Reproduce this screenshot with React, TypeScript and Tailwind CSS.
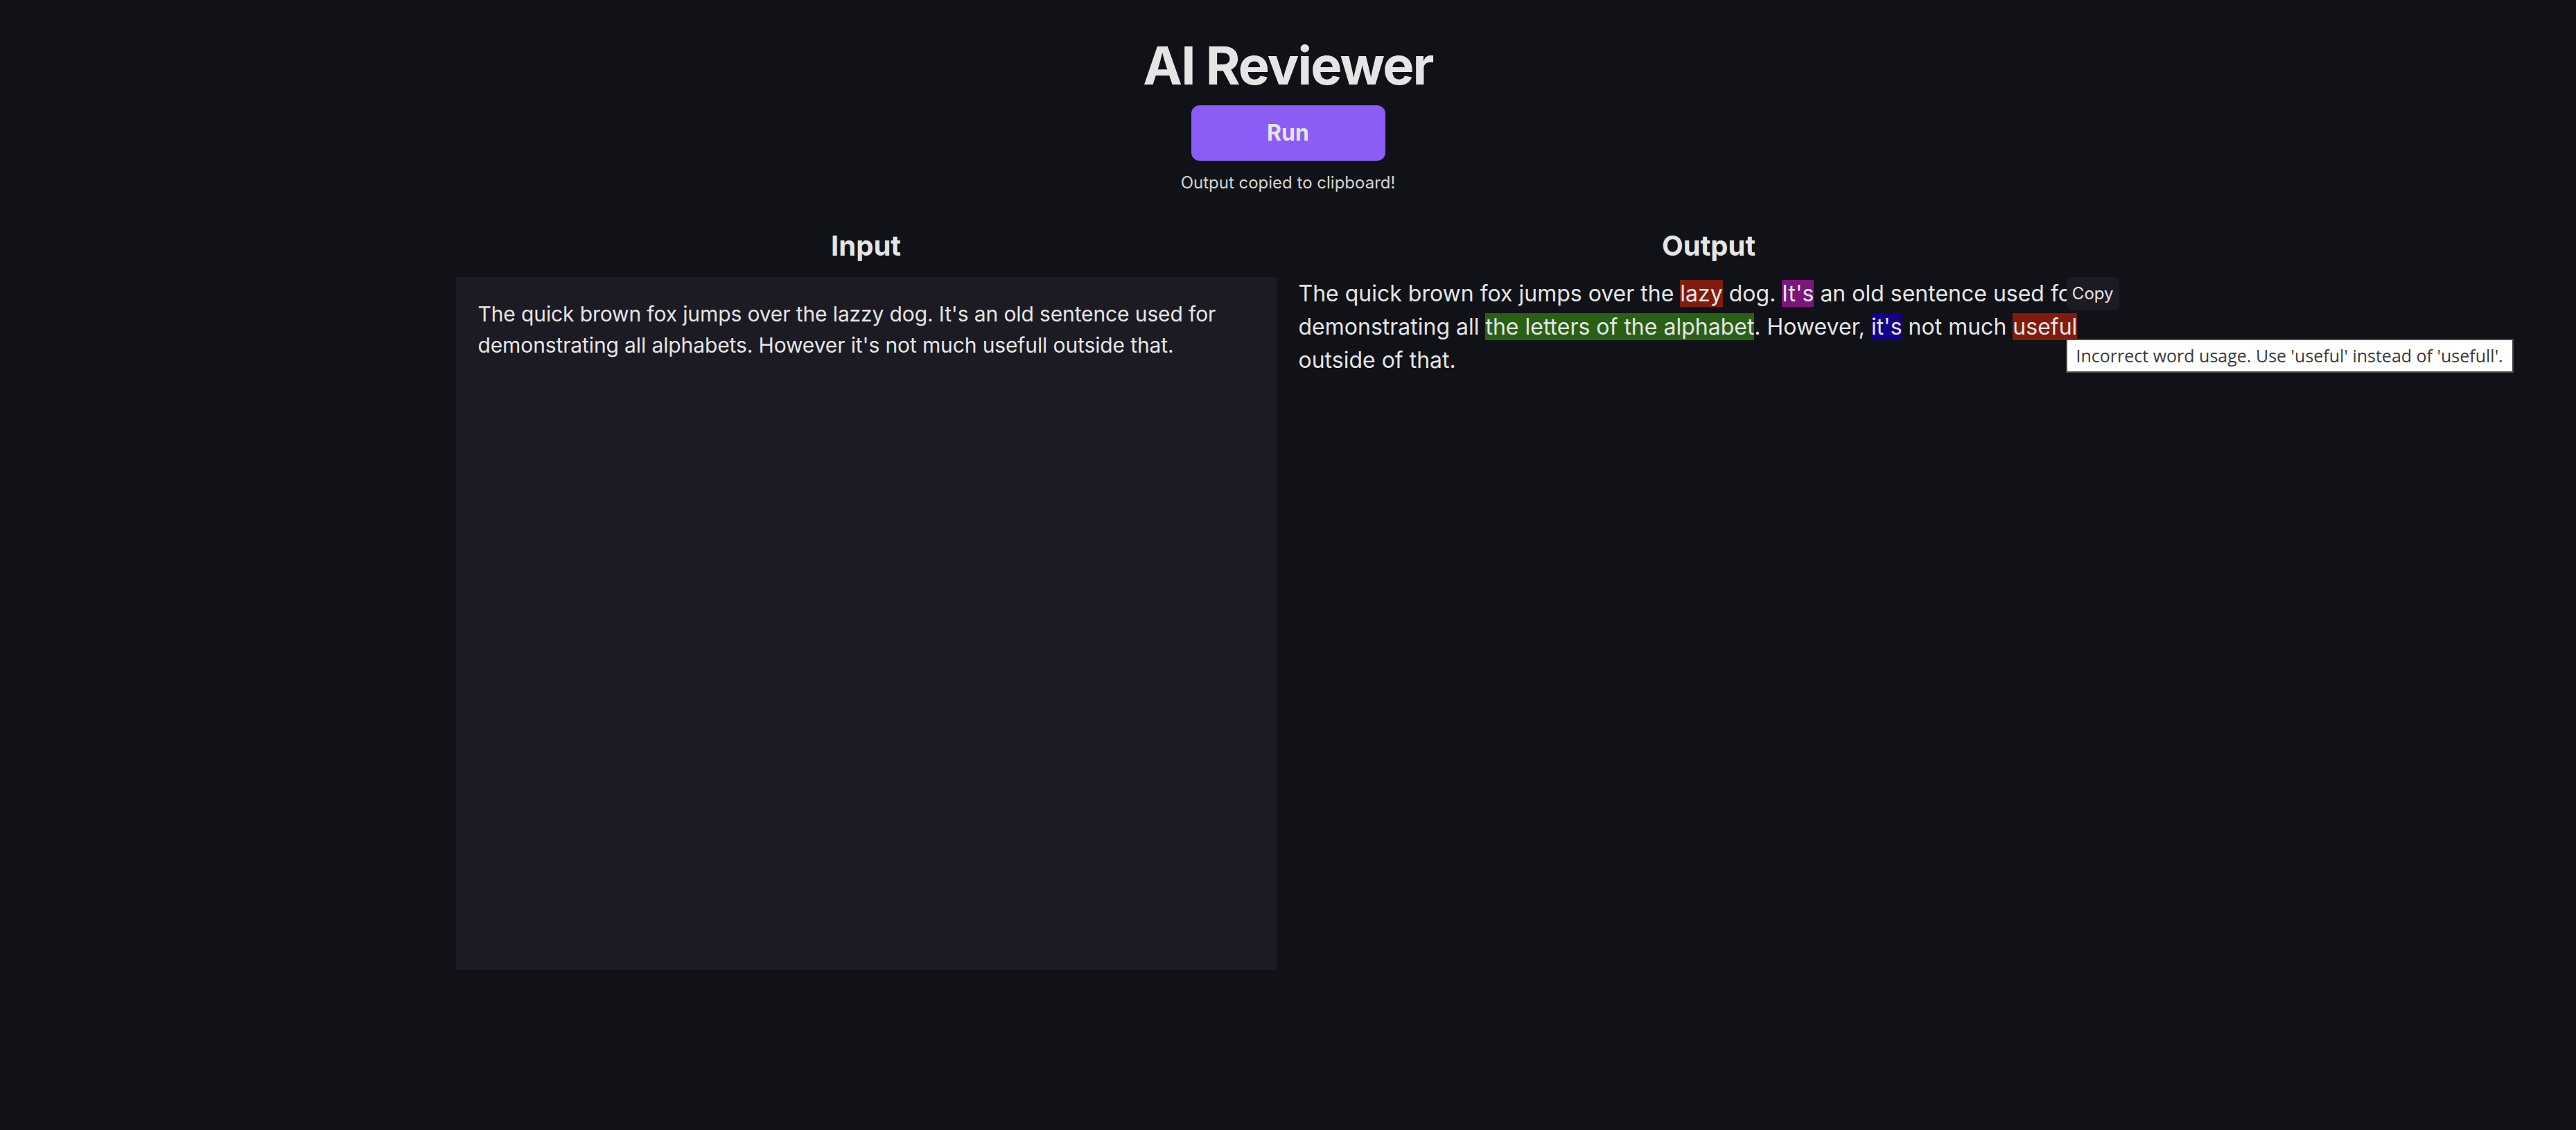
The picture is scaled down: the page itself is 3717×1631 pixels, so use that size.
import React from "react"

const sans = "font-['Inter','Liberation_Sans',sans-serif]"

function Mark({ color, children }: { color: string; children: React.ReactNode }) {
  return <span className={color}>{children}</span>
}

export default function App() {
  return (
    <div className={`min-h-screen bg-[#111217] pt-[56px] text-[#e5e5e5] ${sans}`}>
      <h1 className="text-center text-[76px] leading-[76px] font-bold tracking-[-0.025em] text-[#e5e5e5]">AI Reviewer</h1>
      <button className="mx-auto mt-[20px] block h-[80px] w-[280px] rounded-[12px] bg-[#8b5cf6] text-[32px] font-bold text-[#e5e5e5]">
        Run
      </button>
      <p className="mt-[16px] text-center text-[24px] leading-[32px] text-[#d4d4d4]">Output copied to clipboard!</p>

      <div className="mx-auto mt-[47px] grid w-[2400px] -translate-x-[1px] grid-cols-2 gap-x-[32px]">
        <div>
          <h2 className="mb-[17px] text-center text-[40px] leading-[56px] font-bold">Input</h2>
          <textarea
            readOnly
            className="block h-[1000px] w-full resize-none bg-[#1c1b24] px-[32px] pt-[31px] pb-[32px] text-[30px] leading-[45px] tracking-[-0.004em] text-[#e5e5e5] outline-none"
            value="The quick brown fox jumps over the lazzy dog. It's an old sentence used for demonstrating all alphabets. However it's not much usefull outside that."
          />
        </div>

        <div>
          <h2 className="mb-[17px] text-center text-[40px] leading-[56px] font-bold">Output</h2>
          <div className="relative">
            <p className="text-[32px] leading-[48px]">
              The quick brown fox jumps over the <Mark color="bg-[#801c0e]">lazy</Mark> dog.{" "}
              <Mark color="bg-[#7a167c]">It's</Mark> an old sentence used for demonstrating all{" "}
              <Mark color="bg-[#2a6016]">the letters of the alphabet</Mark>. However,{" "}
              <Mark color="bg-[#12008a]">it's</Mark> not much <Mark color="bg-[#801c0e]">useful</Mark> outside of that.
            </p>
            <button className="absolute top-0 right-0 h-[48px] rounded-[8px] bg-[#1c1b24] px-[8px] text-[24px] leading-[32px] text-[#e5e5e5]">
              Copy
            </button>
            <div className="absolute top-[89px] left-[1107px] border-2 border-[#4a4a4a] bg-white px-[13px] py-[6px] whitespace-nowrap font-['Open_Sans','Noto_Sans',sans-serif] text-[25px] leading-[33px] text-[#3a3a3a]">
              Incorrect word usage. Use 'useful' instead of 'usefull'.
            </div>
          </div>
        </div>
      </div>
    </div>
  )
}
